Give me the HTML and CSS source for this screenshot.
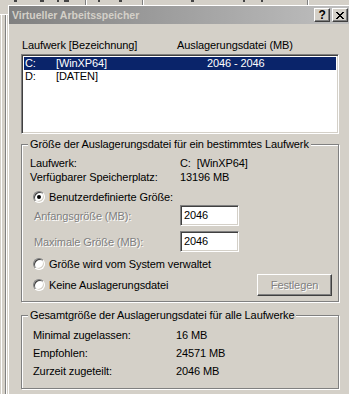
FILE: index.html
```html
<!DOCTYPE html>
<html lang="de">
<head>
    <meta charset="UTF-8">
    <meta name="viewport" content="width=device-width, initial-scale=1.0">
    <title>Virtueller Arbeitsspeicher</title>
    <link rel="stylesheet" href="styles.css">
</head>
<body>

    <!-- Window behind the dialog (only its edges show) -->
    <div class="behind-tabs">
        <span class="behind-tab tab-visual"></span>
        <span class="behind-tab tab-advanced"></span>
        <span class="behind-tab tab-dep"></span>
    </div>

    <div class="desk">
        <div class="behind-edge"></div>

        <!-- Dialog -->
        <div class="dialog">
            <div class="titlebar">
                <span class="title">Virtueller Arbeitsspeicher</span>
                <div class="caption-buttons">
                    <button class="cap-btn help">?</button>
                    <button class="cap-btn close">
                        <svg width="8" height="7" viewBox="0 0 8 7">
                            <path d="M0 0h2v1h1v1h2v-1h1v-1h2v1h-1v1h-1v1h-1v1h1v1h1v1h1v1h-2v-1h-1v-1h-2v1h-1v1h-2v-1h1v-1h1v-1h1v-1h-1v-1h-1v-1h-1z" fill="#000"/>
                        </svg>
                    </button>
                </div>
            </div>

            <div class="dialog-body">
                <div class="list-head">
                    <span class="head-drive">Laufwerk [Bezeichnung]</span>
                    <span>Auslagerungsdatei (MB)</span>
                </div>
                <div class="drive-list">
                    <div class="drive-row selected">
                        <span class="col-letter">C:</span>
                        <span class="col-label">[WinXP64]</span>
                        <span>2046 - 2046</span>
                    </div>
                    <div class="drive-row">
                        <span class="col-letter">D:</span>
                        <span class="col-label">[DATEN]</span>
                        <span></span>
                    </div>
                </div>

                <!-- Size for one drive -->
                <div class="group group-drive">
                    <div class="legend">Größe der Auslagerungsdatei für ein bestimmtes Laufwerk</div>
                    <div class="info-row">
                        <span class="info-label">Laufwerk:</span>
                        <span>C:&nbsp; [WinXP64]</span>
                    </div>
                    <div class="info-row">
                        <span class="info-label">Verfügbarer Speicherplatz:</span>
                        <span>13196 MB</span>
                    </div>
                    <div class="radio-row first-radio">
                        <span class="radio checked"></span>
                        <span>Benutzerdefinierte Größe:</span>
                    </div>
                    <div class="edit-row">
                        <span class="edit-label disabled">Anfangsgröße (MB):</span>
                        <div class="edit">2046</div>
                    </div>
                    <div class="edit-row second-edit">
                        <span class="edit-label disabled">Maximale Größe (MB):</span>
                        <div class="edit">2046</div>
                    </div>
                    <div class="radio-row system-radio">
                        <span class="radio"></span>
                        <span>Größe wird vom System verwaltet</span>
                    </div>
                    <div class="last-row">
                        <div class="radio-row">
                            <span class="radio"></span>
                            <span>Keine Auslagerungsdatei</span>
                        </div>
                        <button class="push-btn disabled">Festlegen</button>
                    </div>
                </div>

                <!-- Totals -->
                <div class="group group-total">
                    <div class="legend">Gesamtgröße der Auslagerungsdatei für alle Laufwerke</div>
                    <div class="total-row">
                        <span class="total-label">Minimal zugelassen:</span>
                        <span>16 MB</span>
                    </div>
                    <div class="total-row">
                        <span class="total-label">Empfohlen:</span>
                        <span>24571 MB</span>
                    </div>
                    <div class="total-row">
                        <span class="total-label">Zurzeit zugeteilt:</span>
                        <span>2046 MB</span>
                    </div>
                </div>
            </div>
        </div>
    </div>

</body>
</html>
```

FILE: styles.css
```css
/* General */
body {
    margin: 0;
    width: 349px;
    height: 394px;
    overflow: hidden;
    background-color: #d4d0c8;
    font-family: 'Liberation Sans', Arial, sans-serif;
    font-size: 11px;
    letter-spacing: -0.1px;
    color: #000;
}

button {
    font-family: inherit;
    font-size: inherit;
    letter-spacing: inherit;
    padding: 0;
    margin: 0;
}

/* Window behind the dialog: only the lower edge of its tabs shows */
.behind-tabs {
    height: 5px;
    display: flex;
}

.behind-tab {
    display: block;
    height: 5px;
    border-right: 1px solid #808080;
    box-shadow: 1px 0 0 #fff;
    /* bits of the cut-off tab captions */
    background-repeat: no-repeat;
}

.tab-visual {
    width: 85px;
    background-image:
        linear-gradient(#444, #444),
        linear-gradient(#444, #444),
        linear-gradient(#444, #444),
        linear-gradient(#444, #444);
    background-size: 3px 2px, 4px 2px, 2px 2px, 5px 2px;
    background-position: 14px 0, 40px 0, 57px 0, 64px 0;
}

.tab-advanced {
    width: 56px;
    background-image:
        linear-gradient(#444, #444),
        linear-gradient(#444, #444);
    background-size: 2px 2px, 3px 2px;
    background-position: 12px 0, 33px 0;
}

.tab-dep {
    width: 164px;
    background-image:
        linear-gradient(#444, #444),
        linear-gradient(#444, #444),
        linear-gradient(#444, #444);
    background-size: 3px 2px, 2px 2px, 2px 2px;
    background-position: 48px 0, 100px 0, 118px 0;
}

.desk {
    display: flex;
}

.behind-edge {
    width: 8px;
    flex-shrink: 0;
    margin-top: 9px;
    height: 380px;
    border-top: 1px solid #fff;
    box-sizing: border-box;
    background:
        linear-gradient(#fff, #fff) 1px 0 / 1px 100% no-repeat,
        linear-gradient(#808080, #808080) 5px 0 / 1px 100% no-repeat,
        linear-gradient(#fff, #fff) 6px 0 / 1px 100% no-repeat;
}

/* Dialog frame */
.dialog {
    width: 342px;
    flex-shrink: 0;
    border-top: 1px solid #fff;
    border-left: 1px solid #fff;
    background-color: #d4d0c8;
}

.titlebar {
    height: 18px;
    display: flex;
    align-items: center;
    justify-content: space-between;
    padding: 0 3px 0 3px;
    background: linear-gradient(to right, #808080, #c0c0c0);
}

.title {
    font-weight: bold;
    font-size: 10.5px;
    letter-spacing: 0;
    color: #d4d0c8;
}

.caption-buttons {
    display: flex;
    gap: 2px;
}

.cap-btn {
    width: 16px;
    height: 14px;
    box-sizing: border-box;
    background-color: #d4d0c8;
    border: 1px solid;
    border-color: #fff #404040 #404040 #fff;
    box-shadow: inset -1px -1px 0 #808080;
    display: flex;
    align-items: center;
    justify-content: center;
    font-weight: bold;
    font-size: 12px;
    line-height: 12px;
}

.cap-btn.close svg {
    display: block;
    margin-left: -1px;
}

.dialog-body {
    padding: 15px 12px 0 12px;
}

/* Drive list */
.list-head {
    display: flex;
    line-height: 13px;
    padding-left: 1px;
    margin-bottom: 2px;
}

.head-drive {
    width: 155px;
}

.drive-list {
    height: 80px;
    box-sizing: border-box;
    background-color: #fff;
    border: 1px solid;
    border-color: #808080 #fff #fff #808080;
    box-shadow: inset 1px 1px 0 #404040, inset -1px -1px 0 #d4d0c8;
    padding: 2px 2px;
}

.drive-row {
    display: flex;
    height: 13px;
    line-height: 13px;
    padding-left: 1px;
}

.drive-row.selected {
    background-color: #0a246a;
    color: #fff;
}

.col-letter {
    width: 31px;
}

.col-label {
    width: 151px;
}

/* Group boxes */
.group {
    border: 1px solid #808080;
    box-shadow: 1px 1px 0 #fff, inset 1px 1px 0 #fff;
    padding: 0 6px 0 8px;
}

.legend {
    width: fit-content;
    margin: -7px 0 0 -2px;
    padding: 0 2px;
    line-height: 13px;
    background-color: #d4d0c8;
}

.group-drive {
    margin-top: 10px;
    padding-bottom: 5px;
}

.group-total {
    margin-top: 13px;
    padding-bottom: 8px;
}

.info-row {
    display: flex;
    height: 14px;
    line-height: 14px;
}

.group-drive .legend {
    margin-bottom: 5px;
}

.info-label {
    width: 150px;
}

.radio-row {
    display: flex;
    align-items: center;
    gap: 4px;
    height: 14px;
    padding-left: 3px;
}

.first-radio {
    margin-top: 6px;
}

.system-radio {
    margin-top: 5px;
}

.radio {
    width: 12px;
    height: 12px;
    box-sizing: border-box;
    border-radius: 50%;
    background-color: #fff;
    border: 1px solid;
    border-color: #808080 #fff #fff #808080;
    box-shadow: inset 1px 1px 0 #404040, inset -1px -1px 0 #d4d0c8;
    display: flex;
    align-items: center;
    justify-content: center;
}

.radio.checked::after {
    content: '';
    width: 4px;
    height: 4px;
    border-radius: 50%;
    background-color: #000;
}

.edit-row {
    display: flex;
    align-items: center;
    margin-top: 1px;
}

.second-edit {
    margin-top: 5px;
}

.edit-label {
    width: 146px;
    padding-left: 4px;
}

.disabled {
    color: #808080;
    text-shadow: 1px 1px 0 #fff;
}

.edit {
    width: 59px;
    height: 21px;
    box-sizing: border-box;
    background-color: #fff;
    border: 1px solid;
    border-color: #808080 #fff #fff #808080;
    box-shadow: inset 1px 1px 0 #404040, inset -1px -1px 0 #d4d0c8;
    padding: 0 3px;
    line-height: 19px;
}

.last-row {
    display: flex;
    align-items: center;
    justify-content: space-between;
    margin-top: 3px;
}

.push-btn {
    width: 75px;
    height: 22px;
    box-sizing: border-box;
    background-color: #d4d0c8;
    border: 1px solid;
    border-color: #fff #404040 #404040 #fff;
    box-shadow: inset -1px -1px 0 #808080;
}

/* Totals */
.group-total .legend {
    margin-bottom: 4px;
}

.total-row {
    display: flex;
    height: 18px;
    line-height: 18px;
    padding-left: 3px;
}

.total-label {
    width: 143px;
}
```
